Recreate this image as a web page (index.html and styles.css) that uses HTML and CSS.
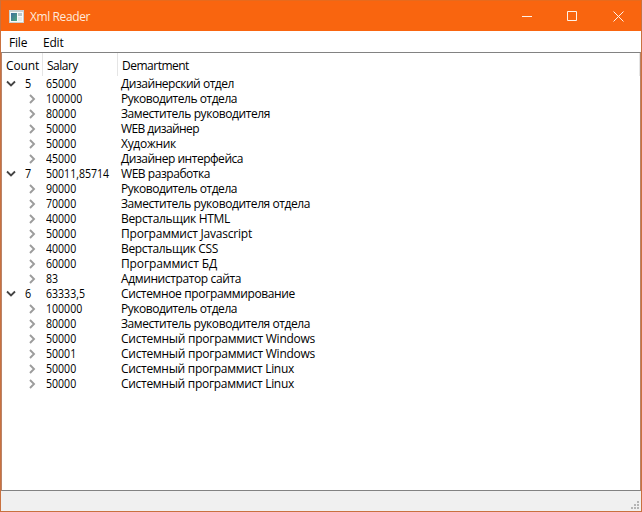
FILE: index.html
```html
<!DOCTYPE html>
<html lang="ru">
<head>
<meta charset="utf-8">
<title>Xml Reader</title>
<link rel="stylesheet" href="styles.css">
</head>
<body>
<div class="window">
  <header class="titlebar">
    <svg class="app-icon" width="15" height="13" viewBox="0 0 15 13">
      <defs><linearGradient id="g" x1="0" y1="0" x2="1" y2="1"><stop offset="0" stop-color="#3e6f9e"/><stop offset="1" stop-color="#4fa67c"/></linearGradient></defs>
      <rect width="15" height="13" fill="#c9cfce"/>
      <rect x="1" y="2" width="13" height="10" fill="#f6f9f8"/>
      <rect x="2" y="3" width="6" height="8" fill="url(#g)"/>
      <rect x="9" y="3" width="4" height="3" fill="#b9c7c8"/>
      <rect x="9" y="7" width="4" height="4" fill="#e3e9e8"/>
    </svg>
    <span class="title">Xml Reader</span>
    <svg class="controls" width="138" height="30" viewBox="0 0 138 30" fill="none" stroke="#fff2e8">
      <path d="M18 15.500h10M63.500 10.500h9v9h-9zM109.500 10.500l10 10M119.500 10.500l-10 10"/>
    </svg>
  </header>
  <nav class="menu"><span class="file">File</span><span class="edit">Edit</span></nav>
  <main class="tree">
    <div class="head"><span class="count">Count</span><span class="salary">Salary</span><span class="dept">Demartment</span></div>
    <div class="rows" id="rows"></div>
  </main>
  <footer class="status">
    <svg width="8" height="8" viewBox="0 0 8 8" fill="#b5b5b5"><path d="M6 0h2v2h-2zM3 3h2v2h-2zM6 3h2v2h-2zM0 6h2v2h-2zM3 6h2v2h-2zM6 6h2v2h-2z"/></svg>
  </footer>
</div>
<script src="tree.js"></script>
</body>
</html>
```
FILE: styles.css
```css
* { box-sizing: border-box; }
body { margin: 0; font: 12px/15px "Open Sans", "Noto Sans", sans-serif; color: #000; }
.window { width: 642px; height: 512px; display: flex; flex-direction: column; border: 1px solid #c9713f; border-top-color: #e86a1c; background: #fff; overflow: hidden; }
.titlebar { height: 30px; margin: 0 -1px; padding-left: 9px; flex: none; display: flex; align-items: center; background: #f9650f; color: #ffeadb; }
.title { margin-left: 6px; flex: 1; letter-spacing: -0.4px; }
.menu { height: 21px; flex: none; display: flex; align-items: center; padding: 1px 0 0 8px; letter-spacing: -0.2px; }
.file { width: 34px; }
.tree { flex: 1; border: 1px solid #828282; border-left-color: #b98368; border-right-color: #b98368; }
.head { height: 23px; display: flex; line-height: 25px; }
.head span { border-right: 1px solid #e5e5e5; padding-left: 4px; white-space: nowrap; }
.head .count { width: 41px; letter-spacing: -0.15px; }
.head .salary { width: 75px; letter-spacing: -0.5px; }
.head .dept { flex: 1; letter-spacing: -0.5px; }
.row { display: grid; grid-template-columns: 44px 75px 1fr; height: 15px; white-space: nowrap; }
.first { display: flex; align-items: center; }
.parent .first { padding-left: 3px; }
.child .first { padding-left: 24px; }
.first span { margin-left: 8px; transform: scaleX(.9); transform-origin: left; }
.arrow { fill: none; stroke: #444; stroke-width: 1.8; }
.child .arrow { stroke: #9c9c9c; stroke-width: 1.9; }
.text { justify-self: start; }
.number { transform: scaleX(.88); transform-origin: left; }
.status { height: 20px; flex: none; background: #f0f0f0; display: flex; justify-content: flex-end; align-items: flex-end; padding: 0 2px 2px 0; }
```
FILE: tree.js
```javascript
// [count (groups only), salary, name, width of the name column text]
const data = [
  ["5", "65000", "Дизайнерский отдел", 113],
  ["", "100000", "Руководитель отдела", 116],
  ["", "80000", "Заместитель руководителя", 149],
  ["", "50000", "WEB дизайнер", 78],
  ["", "50000", "Художник", 55],
  ["", "45000", "Дизайнер интерфейса", 122],
  ["7", "50011,85714", "WEB разработка", 89],
  ["", "90000", "Руководитель отдела", 116],
  ["", "70000", "Заместитель руководителя отдела", 189],
  ["", "40000", "Верстальщик HTML", 109],
  ["", "50000", "Программист Javascript", 131],
  ["", "40000", "Верстальщик CSS", 97],
  ["", "60000", "Программист БД", 96],
  ["", "83", "Администратор сайта", 120],
  ["6", "63333,5", "Системное программирование", 174],
  ["", "100000", "Руководитель отдела", 116],
  ["", "80000", "Заместитель руководителя отдела", 189],
  ["", "50000", "Системный программист Windows", 194],
  ["", "50001", "Системный программист Windows", 194],
  ["", "50000", "Системный программист Linux", 173],
  ["", "50000", "Системный программист Linux", 173]
];
const rows = document.getElementById("rows");
for (const [count, salary, name, width] of data) {
  const row = document.createElement("div");
  row.className = "row " + (count ? "parent" : "child");
  const path = count ? "M2 3.500l4 4 4-4" : "M4 2l4 4-4 4";
  row.innerHTML = `<div class="first"><svg class="arrow" width="12" height="12"><path d="${path}"/></svg><span>${count}</span></div><span class="text number">${salary}</span><span class="text">${name}</span>`;
  rows.append(row);
  const text = row.lastChild;
  const spacing = (width - text.getBoundingClientRect().width) / name.length;
  text.style.letterSpacing = spacing + "px";
}
```
